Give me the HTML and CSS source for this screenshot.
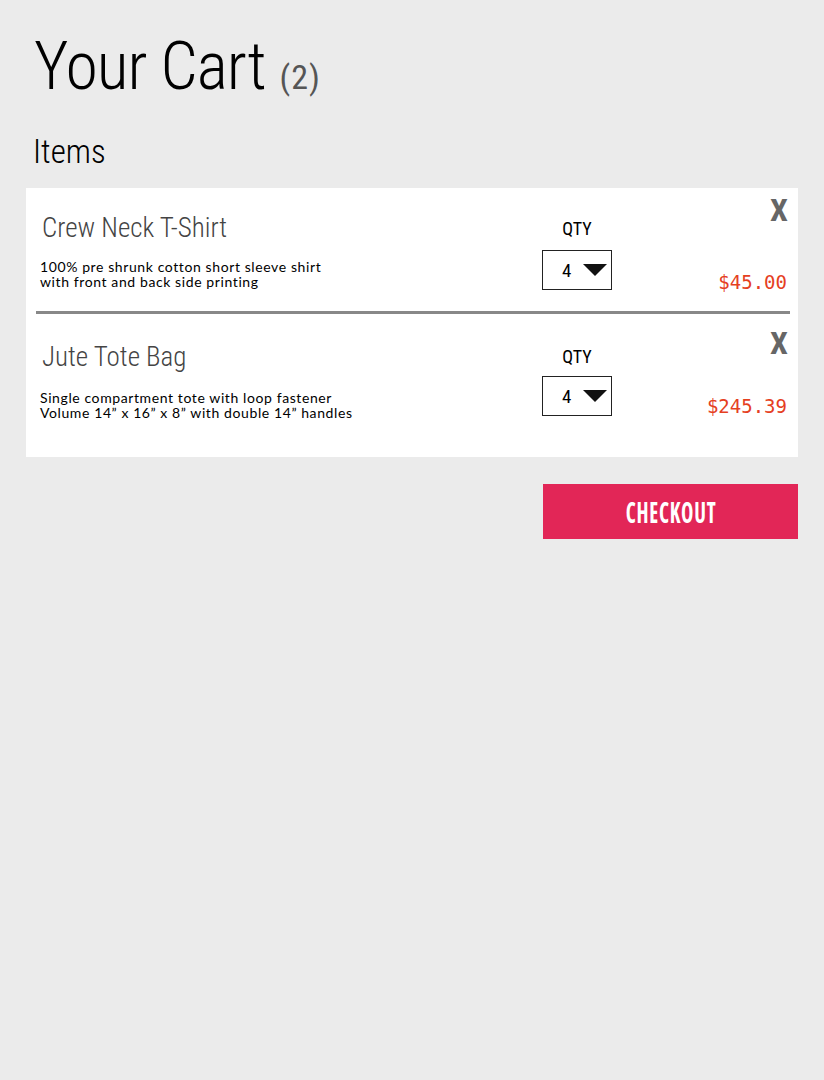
FILE: index.html
```html
<!DOCTYPE html>
<html>
<head>
<meta charset="utf-8">
<link rel="stylesheet" href="styles.css">
</head>
<body>
<div class="page">
  <h1 class="title">Your Cart <span class="count">(2)</span></h1>
  <h2 class="section">Items</h2>
  <div class="panel">
    <div class="item item-first">
      <div class="info">
        <div class="name">Crew Neck T-Shirt</div>
        <div class="desc">100% pre shrunk cotton short sleeve shirt<br>with front and back side printing</div>
      </div>
      <div class="qty">
        <div class="qty-label">QTY</div>
        <div class="select"><span class="val">4</span><span class="tri"></span></div>
      </div>
      <div class="side">
        <div class="remove">X</div>
        <div class="price">$45.00</div>
      </div>
    </div>
    <div class="divider"></div>
    <div class="item item-second">
      <div class="info">
        <div class="name">Jute Tote Bag</div>
        <div class="desc">Single compartment tote with loop fastener<br>Volume 14” x 16” x 8” with double 14” handles</div>
      </div>
      <div class="qty">
        <div class="qty-label">QTY</div>
        <div class="select"><span class="val">4</span><span class="tri"></span></div>
      </div>
      <div class="side">
        <div class="remove">X</div>
        <div class="price">$245.39</div>
      </div>
    </div>
  </div>
  <div class="actions">
    <button class="checkout"><span class="checkout-text">CHECKOUT</span></button>
  </div>
</div>
</body>
</html>
```

FILE: styles.css
```css
html, body {
  margin: 0;
  padding: 0;
  background: #ebebeb;
}
body {
  font-family: "Lato", "Open Sans", sans-serif;
  color: #000;
}
.page {
  padding: 27px 26px 0 26px;
}
.title {
  margin: 0 0 0 8px;
  font-family: "Roboto", sans-serif;
  font-stretch: 75%;
  font-weight: 300;
  font-size: 66px;
  line-height: 80px;
  letter-spacing: -1px;
}
.count {
  font-size: 34px;
  color: #555;
  letter-spacing: 1px;
  font-weight: 400;
}
.section {
  margin: 15px 0 0 7px;
  font-family: "Roboto", sans-serif;
  font-stretch: 75%;
  font-weight: 300;
  font-size: 33px;
  line-height: 40px;
}
.panel {
  background: #fff;
  margin-top: 16px;
  padding: 0 8px 0 10px;
}
.item {
  display: flex;
  align-items: flex-start;
}
.item-first {
  height: 123px;
}
.item-second {
  height: 143px;
}
.info {
  flex: 1;
  padding-left: 6px;
  padding-top: 26px;
}
.name {
  font-family: "Roboto", sans-serif;
  font-stretch: 75%;
  font-size: 27px;
  line-height: 28px;
  color: #444;
  font-weight: 300;
}
.desc {
  margin: 17px 0 0 -2px;
  font-size: 14px;
  line-height: 15px;
  letter-spacing: 0.6px;
}
.qty {
  width: 70px;
  padding-top: 31px;
  margin-right: 108px;
  text-align: center;
}
.qty-label {
  font-family: "Roboto", sans-serif;
  font-stretch: 75%;
  font-size: 18px;
  line-height: 20px;
  margin-bottom: 11px;
}
.select {
  height: 38px;
  border: 1px solid #222;
  display: flex;
  align-items: center;
  padding-left: 19px;
  gap: 12px;
}
.val {
  font-family: "Roboto", sans-serif;
  font-stretch: 75%;
  font-size: 19px;
}
.tri {
  width: 0;
  height: 0;
  border-left: 12px solid transparent;
  border-right: 12px solid transparent;
  border-top: 12px solid #111;
}
.side {
  width: 70px;
  display: flex;
  flex-direction: column;
  align-items: flex-end;
}
.remove {
  margin-top: 6px;
  margin-right: 2px;
  font-family: "Roboto", sans-serif;
  font-stretch: 75%;
  font-weight: 700;
  font-size: 32px;
  line-height: 32px;
  color: #666;
}
.price {
  margin-top: 45px;
  margin-right: 3px;
  font-family: "DejaVu Sans Mono", monospace;
  font-size: 19px;
  letter-spacing: 0;
  color: #e5401f;
}
.item-second .info {
  padding-top: 29px;
}
.item-second .desc {
  margin-top: 19px;
}
.item-second .qty {
  padding-top: 33px;
}
.item-second .qty-label {
  margin-bottom: 9px;
}
.item-second .remove {
  margin-top: 13px;
}
.item-second .price {
  margin-top: 36px;
}
.divider {
  height: 3px;
  background: #888;
}
.actions {
  display: flex;
  justify-content: flex-end;
  margin-top: 27px;
}
.checkout {
  width: 255px;
  height: 55px;
  border: 0;
  padding: 0;
  background: #e22657;
  color: #fff;
  font-family: "Open Sans", sans-serif;
  font-stretch: 75%;
  font-weight: 700;
  font-size: 29px;
  cursor: pointer;
  display: flex;
  align-items: center;
  justify-content: center;
}
.checkout-text {
  display: inline-block;
  transform: scaleX(0.72);
  letter-spacing: 1px;
}
```
